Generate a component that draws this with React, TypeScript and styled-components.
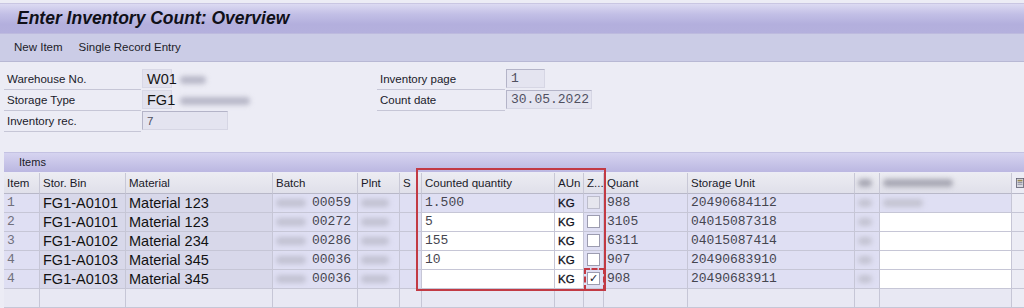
import styled, { createGlobalStyle, css } from 'styled-components';

const Global = createGlobalStyle`
  html, body { margin: 0; padding: 0; }
  body {
    width: 1024px;
    height: 308px;
    overflow: hidden;
    background: #ececf5;
    font-family: "Liberation Sans", Arial, sans-serif;
    font-size: 11.5px;
    color: #1a1a2a;
  }
`;

const Screen = styled.div`
  display: flex;
  flex-direction: column;
  height: 308px;
`;

const TitleBar = styled.div`
  margin-top: 3px;
  height: 29px;
  border-top: 1px solid #c9c6e2;
  background: linear-gradient(#dcdaf2 0%, #c2bfe6 35%, #b3afdd 70%, #b4b0dd 100%);
  display: flex;
  align-items: center;
  padding-left: 17px;
  font-size: 17.5px;
  font-weight: bold;
  font-style: italic;
  color: #101018;
`;

const Toolbar = styled.div`
  height: 28px;
  background: #cbcce6;
  border-top: 1px solid #bdbade;
  border-bottom: 1px solid #b8b8d4;
  display: flex;
  align-items: center;
  gap: 16px;
  padding-left: 14px;
  color: #1c1c28;
`;

const Form = styled.div`
  display: flex;
  padding: 7px 0 0 4px;
  height: 82px;
`;

const FieldCol = styled.div<{ $w: number }>`
  display: flex;
  flex-direction: column;
  width: ${p => p.$w}px;
`;

const FieldRow = styled.div`
  display: flex;
  height: 21px;
  align-items: stretch;
`;

const Label = styled.div<{ $w: number }>`
  width: ${p => p.$w}px;
  border-bottom: 1px solid #c6c6d6;
  display: flex;
  align-items: center;
  padding-left: 3px;
  box-sizing: border-box;
`;

const Value = styled.div<{ $w: number; $mono?: boolean; $big?: boolean }>`
  width: ${p => p.$w}px;
  height: 19px;
  box-sizing: border-box;
  margin-left: 1px;
  background: #e4e4f0;
  border: 1px solid #b4b4c8;
  border-right-color: #d6d6e4;
  border-bottom-color: #d6d6e4;
  display: flex;
  align-items: center;
  padding-left: 4px;
  color: #505060;
  ${p => p.$mono && css`font-family: "Liberation Mono", "Courier New", monospace; font-size: 13px;`}
  ${p => p.$big && css`font-size: 14.5px; color: #151515; border-color: #d8d8e6; background: #e2e2ee;`}
`;

const Blur = styled.span<{ $w: number; $c?: string }>`
  display: inline-block;
  width: ${p => p.$w}px;
  height: 8px;
  border-radius: 4px;
  background: ${p => p.$c || '#b8b8c8'};
  filter: blur(2.5px);
`;

const BlurWrap = styled.div`
  display: flex;
  align-items: center;
  padding-left: 8px;
  gap: 6px;
`;

const Section = styled.div`
  position: relative;
  margin-top: 2px;
  padding-left: 4px;
`;

const ItemsBar = styled.div`
  height: 19px;
  background: linear-gradient(#d6d4f0, #bbb7e1);
  border-top: 1px solid #c4c2e2;
  display: flex;
  align-items: center;
  padding-left: 15px;
  font-size: 11px;
  color: #1a1a28;
`;

const cols = '36px 86px 147px 85px 42px 22px 133px 29px 20px 84px 167px 25px 132px 1fr';

const Grid = styled.div`
  display: grid;
  grid-template-columns: ${cols};
  margin-top: 1px;
`;

const Head = styled.div`
  height: 21px;
  box-sizing: border-box;
  background: linear-gradient(#ececf2, #e0e0ea);
  border-right: 1px solid #c8c8d6;
  border-bottom: 1px solid #b8b8c8;
  display: flex;
  align-items: center;
  padding-left: 3px;
  font-size: 11.5px;
  white-space: nowrap;
  overflow: hidden;
  color: #1a1a28;
`;

type Kind = 'row' | 'input' | 'empty';

const Cell = styled.div<{ $kind: Kind; $mono?: boolean; $big?: boolean; $gray?: boolean }>`
  height: 19px;
  box-sizing: border-box;
  border-right: 1px solid #c6c6d6;
  border-bottom: 1px solid #c6c6d6;
  display: flex;
  align-items: center;
  padding-left: 3px;
  overflow: hidden;
  white-space: nowrap;
  background: ${p => (p.$kind === 'input' ? '#ffffff' : p.$kind === 'empty' ? '#e8e8f3' : '#dfdff3')};
  ${p => p.$mono && css`font-family: "Liberation Mono", "Courier New", monospace; font-size: 13px; color: #45454f;`}
  ${p => p.$gray && css`color: #70707c;`}
  ${p => p.$big && css`
    font-size: 14.5px;
    color: #121212;
    background: #d8d8ea;
    padding-left: 3px;
  `}
`;

const Unit = styled.span`
  font-size: 11.5px;
  color: #101020;
  -webkit-text-stroke: 0.3px #101020;
`;

const Check = styled.div<{ $disabled?: boolean }>`
  width: 13px;
  height: 13px;
  box-sizing: border-box;
  border: 1px solid ${p => (p.$disabled ? '#bdbdcc' : '#9c9cb0')};
  background: ${p => (p.$disabled ? '#e6e6ee' : '#ffffff')};
  display: flex;
  align-items: center;
  justify-content: center;
  font-size: 11px;
  line-height: 1;
  color: #202030;
`;

const BatchCell = styled.div`
  display: flex;
  align-items: center;
  width: 100%;
  gap: 6px;
`;

const RedBox = styled.div`
  position: absolute;
  left: 416px;
  top: 16px;
  width: 190px;
  height: 123px;
  box-sizing: border-box;
  border: 2px solid #c23a44;
  pointer-events: none;
`;

const RedDash = styled.div`
  position: absolute;
  left: 584px;
  top: 116px;
  width: 21px;
  height: 23px;
  box-sizing: border-box;
  border: 2px dashed #c23a44;
  pointer-events: none;
`;

const SettingsIcon = () => (
  <svg width="10" height="12" viewBox="0 0 10 12">
    <rect x="0.5" y="0.5" width="9" height="11" fill="#d8d8e0" stroke="#606070" />
    <rect x="2" y="2" width="6" height="2" fill="#9a8a50" />
    <rect x="2" y="5" width="6" height="1" fill="#808090" />
    <rect x="2" y="7" width="6" height="1" fill="#808090" />
  </svg>
);

const rows = [
  { item: '1', bin: 'FG1-A0101', mat: 'Material 123', batch: '00059', qty: '1.500', quant: '988', su: '20490684112', checked: false },
  { item: '2', bin: 'FG1-A0101', mat: 'Material 123', batch: '00272', qty: '5', quant: '3105', su: '04015087318', checked: false },
  { item: '3', bin: 'FG1-A0102', mat: 'Material 234', batch: '00286', qty: '155', quant: '6311', su: '04015087414', checked: false },
  { item: '4', bin: 'FG1-A0103', mat: 'Material 345', batch: '00036', qty: '10', quant: '907', su: '20490683910', checked: false },
  { item: '4', bin: 'FG1-A0103', mat: 'Material 345', batch: '00036', qty: '', quant: '908', su: '20490683911', checked: true },
];

const heads = ['Item', 'Stor. Bin', 'Material', 'Batch', 'Plnt', 'S', 'Counted quantity', 'AUn', 'Z...', 'Quant', 'Storage Unit'];

export default function App() {
  return (
    <Screen>
      <Global />
      <TitleBar>Enter Inventory Count: Overview</TitleBar>
      <Toolbar>
        <span>New Item</span>
        <span>Single Record Entry</span>
      </Toolbar>

      <Form>
        <FieldCol $w={373}>
          <FieldRow>
            <Label $w={137}>Warehouse No.</Label>
            <Value $w={30} $big>W01</Value>
            <BlurWrap><Blur $w={26} /></BlurWrap>
          </FieldRow>
          <FieldRow>
            <Label $w={137}>Storage Type</Label>
            <Value $w={30} $big>FG1</Value>
            <BlurWrap><Blur $w={70} /></BlurWrap>
          </FieldRow>
          <FieldRow>
            <Label $w={137}>Inventory rec.</Label>
            <Value $w={86}>7</Value>
          </FieldRow>
        </FieldCol>
        <FieldCol $w={230}>
          <FieldRow>
            <Label $w={128}>Inventory page</Label>
            <Value $w={39} $mono>1</Value>
          </FieldRow>
          <FieldRow>
            <Label $w={128}>Count date</Label>
            <Value $w={86} $mono>30.05.2022</Value>
          </FieldRow>
        </FieldCol>
      </Form>

      <Section>
        <ItemsBar>Items</ItemsBar>
        <Grid>
          {heads.map(h => <Head key={h}>{h}</Head>)}
          <Head><Blur $w={14} $c="#a8a8b4" /></Head>
          <Head><Blur $w={70} $c="#a8a8b4" /></Head>
          <Head style={{ borderRight: 'none', background: '#ececf5', paddingLeft: 4 }}><SettingsIcon /></Head>

          {rows.map((r, i) => {
            const inp: Kind = i === 0 ? 'row' : 'input';
            return [
              <Cell key={`a${i}`} $kind="row" $mono $gray>{r.item}</Cell>,
              <Cell key={`b${i}`} $kind="row" $big>{r.bin}</Cell>,
              <Cell key={`c${i}`} $kind="row" $big>{r.mat}</Cell>,
              <Cell key={`d${i}`} $kind="row" $mono>
                <BatchCell><Blur $w={30} $c="#c2c2d2" />{r.batch}</BatchCell>
              </Cell>,
              <Cell key={`e${i}`} $kind="row"><Blur $w={28} $c="#c2c2d2" /></Cell>,
              <Cell key={`f${i}`} $kind="row" />,
              <Cell key={`g${i}`} $kind={inp} $mono>{r.qty}</Cell>,
              <Cell key={`h${i}`} $kind={inp}><Unit>KG</Unit></Cell>,
              <Cell key={`i${i}`} $kind="row"><Check $disabled={i === 0}>{r.checked ? '✓' : ''}</Check></Cell>,
              <Cell key={`j${i}`} $kind="row" $mono>{r.quant}</Cell>,
              <Cell key={`k${i}`} $kind="row" $mono>{r.su}</Cell>,
              <Cell key={`l${i}`} $kind="row"><Blur $w={14} $c="#c4c4d2" /></Cell>,
              <Cell key={`m${i}`} $kind={inp}>{i === 0 && <Blur $w={40} $c="#c4c4d2" />}</Cell>,
              <Cell key={`n${i}`} $kind="empty" style={{ borderRight: 'none', background: '#ececf5' }} />,
            ];
          })}

          {Array.from({ length: 14 }).map((_, j) => (
            <Cell key={`z${j}`} $kind="empty" style={j === 13 ? { borderRight: 'none', background: '#ececf5' } : undefined} />
          ))}
        </Grid>
        <RedBox />
        <RedDash />
      </Section>
    </Screen>
  );
}
